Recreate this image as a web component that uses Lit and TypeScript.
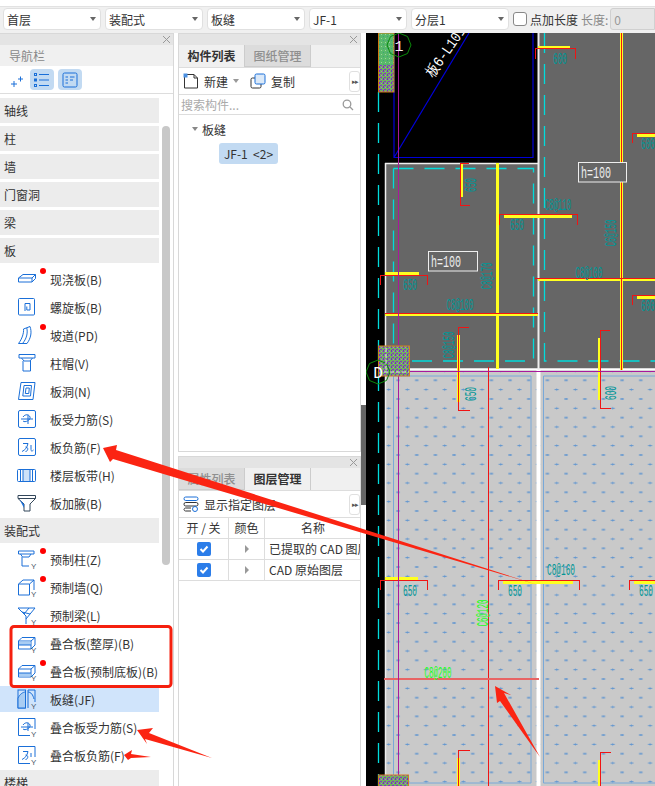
import { LitElement, html, svg, css } from "lit";
import { customElement } from "lit/decorators.js";

const RED = "#f01414";
const YEL = "#ffff20";
const TEAL = "#009696";
const CYAN = "#00dcdc";
const LIME = "#20ff20";

const Y = svg`<text x="14" y="19.5" font-size="8" font-family="Liberation Sans" fill="#4a5a6a" stroke="none">Y</text>`;

// nav icons, drawn on a 20x20 box
const icons: Record<string, unknown> = {
  slab: svg`<path d="M1.5 9L6 5.5H18.5V9.5L15 13H1.5ZM1.5 9H15V13M15 9L18.5 5.5" />`,
  spiral: svg`<rect x="1.5" y="1.5" width="16" height="16.5" rx="1" /><path d="M8 14V6.5H13V13H9.8V9.5" />`,
  ramp: svg`<path d="M1.5 18.5C5 14 7 8 6.5 4L13 1.5C15 7 14 13 10 18.5ZM9.8 3C11 8 9.5 14 5.5 18.5" />`,
  cap: svg`<path d="M2 1.5H18V5H2ZM4.5 5L7 8H13L15.5 5M6 8V18H13.5V8" />`,
  hole: svg`<path d="M4 1.5H18L16 18.5H1.5ZM7 4.5H14.5L13.5 15H5.8ZM9 7H12.3L11.8 12.5H8.3Z" />`,
  force: svg`<rect x="1.5" y="1.5" width="17" height="17" rx="1.5" /><path d="M6 8C8 5 12 5 13 8C14 11 8 14 6 12M4 10H16M11 6V15" />`,
  neg: svg`<rect x="1.5" y="1.5" width="17" height="17" rx="1.5" /><path d="M6 6.5H11C10 11 8 13 5 14.5M8.5 10C12 10 11 14.5 8.5 14.5M14 8V12.5C14 14.5 15 14.5 16.5 13" />`,
  band: svg`<rect x="0.5" y="4.5" width="18" height="12" rx="1" /><rect x="6" y="5" width="7" height="11" fill="#cfe2f8" stroke="none" /><path d="M6 4.5V16.5M13 4.5V16.5M3.5 4.5V16.5M15.5 4.5V16.5" />`,
  haunch: svg`<path d="M1 2.5H18.5V5.5H1ZM1 5.5L7 11V18H13V11L18.5 5.5" stroke="#33465a" /><path d="M2.5 6.5L7 11V15Z" fill="#1a6fd8" stroke="none" />`,
  preCol: svg`<path d="M1.5 2H17V5H1.5ZM3.5 5L5.5 8H12L14 5M5 8V17H12" />${Y}`,
  preWall: svg`<path d="M1.5 7L6 3H17V13M1.5 7V18H12.5V7ZM12.5 7L17 3" />${Y}`,
  preBeam: svg`<path d="M1 3H18L9 14V11L1 3ZM9 14V19M5 7L13 9M12 3L7 9" />${Y}`,
  lamThick: svg`<path d="M1.5 8L5 4.5H18V12L14 16H1.5ZM1.5 8H14V16M14 8L18 4.5" /><rect x="2" y="8.5" width="11.5" height="3.5" fill="#a9cdf3" stroke="none" /><path d="M1.5 12H14" />${Y}`,
  lamBase: svg`<path d="M1.5 8L5 4.5H18V12L14 16H1.5ZM1.5 8H14V16M14 8L18 4.5" /><rect x="2" y="12" width="11.5" height="3.5" fill="#a9cdf3" stroke="none" /><path d="M1.5 12H14" />${Y}`,
  joint: svg`<rect x="1" y="1" width="7.5" height="18" /><path d="M1 9C3 5 6 3 8.500 3V19H1Z" fill="#a9cdf3" /><path d="M11 19V1H18V13M11 3C14 3 16 6 17 10" />${Y}`,
  lamForce: svg`<path d="M13 18.500H1.500V1.500H18V12" /><path d="M6 8C8 5 12 5 13 8C14 11 8 14 6 12M4 10H16M11 6V14" />${Y}`,
  lamNeg: svg`<path d="M13 18.500H1.500V1.500H18V12" /><path d="M6 6.500H11C10 11 8 13 5 14.500M8.500 10C12 10 11 14.500 8.500 14.500M14 8V12" />${Y}`,
};

type NavRow = { label: string; head?: boolean; icon?: string; dot?: boolean; on?: boolean };

const navRows: NavRow[] = [
  { label: "轴线", head: true },
  { label: "柱", head: true },
  { label: "墙", head: true },
  { label: "门窗洞", head: true },
  { label: "梁", head: true },
  { label: "板", head: true },
  { label: "现浇板(B)", icon: "slab", dot: true },
  { label: "螺旋板(B)", icon: "spiral" },
  { label: "坡道(PD)", icon: "ramp", dot: true },
  { label: "柱帽(V)", icon: "cap" },
  { label: "板洞(N)", icon: "hole" },
  { label: "板受力筋(S)", icon: "force" },
  { label: "板负筋(F)", icon: "neg" },
  { label: "楼层板带(H)", icon: "band" },
  { label: "板加腋(B)", icon: "haunch" },
  { label: "装配式", head: true },
  { label: "预制柱(Z)", icon: "preCol", dot: true },
  { label: "预制墙(Q)", icon: "preWall", dot: true },
  { label: "预制梁(L)", icon: "preBeam" },
  { label: "叠合板(整厚)(B)", icon: "lamThick" },
  { label: "叠合板(预制底板)(B)", icon: "lamBase", dot: true },
  { label: "板缝(JF)", icon: "joint", on: true },
  { label: "叠合板受力筋(S)", icon: "lamForce" },
  { label: "叠合板负筋(F)", icon: "lamNeg" },
  { label: "楼梯", head: true },
];

// drawing strokes in page coordinates
const strokes: [string, string, number][] = [
  // yellow bars first, red rebar on top
  ["M538 47H570M637 135H655M637 297H655M504 216H572M538 279H655M385 273H419M385 314H538M461 163V197M497 163V369M621 33V370M458 335V402M599 338V400M385 578H418M503 582H573M634 582H655M458 758V786M599 760V786", YEL, 3],
  ["M535 59V48H575V59M632 143V133H655M632 305V295H655M499 225V214H577V225M535 278H655M380 285V275H427V285M385 313H538M460 163.500H469M460 163V205H470M621 33V370M398.500 163V297M459 327H469M458.500 327V370M458.500 370V410H470M600 330H610M600 330V408H611M488.500 367V786M380 590V580H427V590M498 590V580H579V590M629 590V580H655M458.500 786V750H470M600 786V752H611", RED, 1],
  ["M384 679H539", "#e86464", 2],
  ["M398.500 33V786M386 371.500H655", "#a8189c", 1],
];

const cadTexts: [number, number, string, string, number, boolean][] = [
  [560, 64, "600", TEAL, 14, false],
  [648, 149, "600", TEAL, 14, false],
  [648, 311, "600", TEAL, 14, false],
  [517, 230, "650", TEAL, 14, false],
  [410, 290, "650", TEAL, 14, false],
  [558, 210, "C8@110", TEAL, 26, false],
  [589, 278, "C8@100", TEAL, 27, false],
  [460, 310, "C8@100", TEAL, 27, false],
  [616, 233, "C6@150", TEAL, 27, true],
  [492, 276, "C8@170", TEAL, 27, true],
  [454, 345, "C8@150", TEAL, 27, true],
  [476, 185, "650", TEAL, 14, true],
  [476, 394, "650", TEAL, 14, true],
  [616, 393, "600", TEAL, 14, true],
  [410, 596, "650", TEAL, 14, false],
  [515, 596, "650", TEAL, 14, false],
  [646, 596, "650", TEAL, 14, false],
  [561, 575, "C8@160", TEAL, 28, false],
  [488, 613, "C6@120", LIME, 27, true],
  [438, 678, "C8@200", LIME, 27, false],
];

@customElement("app-root")
export class AppRoot extends LitElement {
  static styles = css`
    :host {
      display: block;
      position: relative;
      width: 655px;
      height: 786px;
      overflow: hidden;
      background: #fff;
      font-family: "Noto Sans CJK SC", "Noto Sans", sans-serif;
      font-size: 12px;
      color: #333;
    }
    .topbar {
      height: 24px;
      margin-top: 6px;
      padding: 0 0 2px 3px;
      box-sizing: content-box;
      border-top: 1px solid #e2e2e2;
      background: #f0f0f0;
      display: flex;
      align-items: center;
      gap: 4px;
      white-space: nowrap;
    }
    .combo {
      width: 98px;
      height: 22px;
      box-sizing: border-box;
      background: #fff;
      border: 1px solid #e0e0e0;
      border-radius: 4px;
      display: flex;
      align-items: center;
      justify-content: space-between;
      padding: 0 4px 0 3px;
    }
    .caret {
      width: 0;
      height: 0;
      border: 3px solid transparent;
      border-top: 4px solid #666;
      border-bottom: 0;
    }
    .check {
      width: 14px;
      height: 14px;
      box-sizing: border-box;
      border: 1px solid #888;
      border-radius: 3px;
      background: #fff;
      margin-right: -1px;
    }
    .muted {
      color: #8a8a8a;
      margin-left: -1px;
    }
    .len {
      flex: 1;
      height: 22px;
      box-sizing: border-box;
      border: 1px solid #d0d0d0;
      border-radius: 3px 0 0 3px;
      background: #e6e6e6;
      color: #999;
      padding: 2px 3px;
      margin-left: -2px;
    }
    .main {
      display: grid;
      grid-template-columns: 174px 4px 183px 5px 289px;
      height: 753px;
    }
    .panel {
      border: 1px solid #d8d8d8;
      border-bottom: 0;
      box-sizing: border-box;
      background: #fff;
      overflow: hidden;
    }
    .nav {
      grid-column: 1;
      border-left: 0;
      display: flex;
      flex-direction: column;
    }
    .grip {
      height: 11px;
      background: #e4e4e4;
      display: flex;
      justify-content: flex-end;
      align-items: center;
      padding-right: 3px;
      flex: none;
    }
    .grip svg {
      width: 7px;
      height: 7px;
      stroke: #999;
      fill: none;
    }
    .nav-title {
      height: 21px;
      line-height: 21px;
      background: #f0f0f0;
      color: #888;
      padding-left: 9px;
    }
    .nav-tools {
      height: 28px;
      box-sizing: border-box;
      border-bottom: 1px solid #ddd;
      display: flex;
      align-items: center;
      gap: 4px;
      padding-left: 8px;
    }
    .nav-tools .btn {
      width: 24px;
      height: 21px;
      border-radius: 4px;
      background: #c2daf2;
      display: flex;
      align-items: center;
      justify-content: center;
    }
    .nav-tools .plain {
      width: 18px;
      background: none;
      margin-right: 0;
    }
    .nav-tools svg {
      width: 16px;
      height: 16px;
      stroke: #1a6fd8;
      fill: none;
    }
    .nav-body {
      display: flex;
      flex: 1;
      overflow: hidden;
    }
    .list {
      width: 159px;
      padding-top: 4px;
      flex: none;
    }
    .thumb {
      width: 8px;
      height: 439px;
      margin: 32px 0 0 3px;
      border-radius: 4px;
      background: #c8c8c8;
    }
    .head {
      height: 25px;
      line-height: 25px;
      background: #ececec;
      margin-bottom: 3px;
      padding-left: 4px;
    }
    .item + .head {
      margin-top: 1px;
    }
    .item {
      position: relative;
      height: 28px;
      box-sizing: border-box;
      border-top: 1px solid transparent;
      border-bottom: 1px solid transparent;
      background-clip: padding-box;
      display: flex;
      align-items: center;
      gap: 13px;
      padding-left: 17px;
      white-space: nowrap;
    }
    .head + .item {
      margin-top: -1px;
    }
    .item.on {
      background-color: #d0e4fb;
    }
    .item svg {
      width: 20px;
      height: 20px;
      flex: none;
      fill: none;
      stroke: #1a6fd8;
      stroke-width: 1;
    }
    .dot {
      position: absolute;
      left: 40px;
      top: 2px;
      width: 6px;
      height: 6px;
      border-radius: 50%;
      background: #f00;
    }
    .mid {
      grid-column: 3;
      display: flex;
      flex-direction: column;
      gap: 4px;
      min-width: 0;
    }
    .mid .panel {
      min-height: 0;
    }
    .mid .upper {
      height: 419px;
      border-bottom: 1px solid #d8d8d8;
    }
    .mid .lower {
      flex: 1;
    }
    .tabs {
      height: 23px;
      background: #f0f0f0;
      display: flex;
      border-bottom: 1px solid #ddd;
      box-sizing: border-box;
    }
    .tab {
      width: 65px;
      text-align: center;
      line-height: 22px;
      font-weight: 700;
      color: #333;
      border-right: 1px solid #ccc;
    }
    .tab.off {
      background: #dcdcdc;
      color: #8f8f8f;
      font-weight: 500;
      border-bottom: 1px solid #ccc;
    }
    .tab.cur {
      background: #f0f0f0;
    }
    .tools {
      height: 27px;
      box-sizing: border-box;
      border-bottom: 1px solid #ddd;
      display: flex;
      align-items: center;
      padding-left: 4px;
      gap: 5px;
    }
    .tools svg {
      width: 16px;
      height: 16px;
      flex: none;
      fill: none;
    }
    .tools .copy {
      margin-left: 6px;
    }
    .tools .caret {
      border-top-color: #999;
    }
    .more {
      margin-left: auto;
      width: 9px;
      height: 19px;
      border: 1px solid #e0e0e0;
      border-radius: 3px;
      display: flex;
      align-items: center;
      justify-content: center;
      font-size: 7px;
      color: #555;
      letter-spacing: -1px;
    }
    .search {
      height: 20px;
      box-sizing: border-box;
      border-bottom: 1px solid #ddd;
      display: flex;
      align-items: center;
      justify-content: space-between;
      padding: 0 6px 0 2px;
      color: #aaa;
    }
    .search svg {
      width: 12px;
      height: 12px;
      stroke: #999;
      fill: none;
      stroke-width: 1.3;
    }
    .tree-row {
      margin: 5px 0 0 13px;
      display: flex;
      align-items: center;
      gap: 4px;
      height: 18px;
    }
    .tree-row .caret {
      border-top-color: #888;
    }
    .chip {
      margin: 5px 0 0 40px;
      width: 59px;
      height: 21px;
      line-height: 21px;
      border-radius: 3px;
      background: #c2daf2;
      text-align: center;
      white-space: pre;
    }
    .cols {
      display: grid;
      grid-template-columns: 50px 36px 96px;
    }
    .cols > div {
      height: 21px;
      line-height: 20px;
      box-sizing: border-box;
      border-right: 1px solid #ddd;
      border-bottom: 1px solid #ddd;
      text-align: center;
      white-space: nowrap;
      overflow: hidden;
      display: flex;
      align-items: center;
      justify-content: center;
    }
    .cols > div.name {
      justify-content: flex-start;
      padding-left: 4px;
      border-right: 0;
    }
    .cols > div.hn {
      border-right: 0;
    }
    .box {
      width: 14px;
      height: 14px;
      border-radius: 2px;
      background: #2b7de9;
      display: flex;
    }
    .box svg {
      width: 14px;
      height: 14px;
      fill: none;
      stroke: #fff;
      stroke-width: 2;
    }
    .tri {
      width: 0;
      height: 0;
      border: 4px solid transparent;
      border-left: 4px solid #999;
      border-right: 0;
    }
    .split {
      grid-column: 4;
    }
    .handle {
      width: 5px;
      height: 100px;
      margin-top: 372px;
      background: #666;
    }
    .canvas {
      grid-column: 5;
      display: block;
    }
    .canvas text {
      font-family: "Liberation Mono", monospace;
    }
    .marks {
      position: absolute;
      left: 0;
      top: 0;
      pointer-events: none;
    }
  `;

  private navRow(r: NavRow) {
    if (r.head) return html`<div class="head">${r.label}</div>`;
    return html`<div class="item ${r.on ? "on" : ""}">
      <svg viewBox="0 0 20 20">${icons[r.icon!]}</svg>
      <span>${r.label}</span>
      ${r.dot ? html`<i class="dot"></i>` : ""}
    </div>`;
  }

  private grip() {
    return html`<div class="grip"><svg viewBox="0 0 7 7"><path d="M0 0L7 7M7 0L0 7" /></svg></div>`;
  }

  private cad() {
    return svg`
      <defs>
        <pattern id="dots" width="18.67" height="18.67" patternUnits="userSpaceOnUse" x="2" y="1">
          <path d="M2 6H6M4 5V7M11.300 15.300H15.300M13.300 14.300V16.300" stroke="#5b93d0" stroke-width="1" />
        </pattern>
        <pattern id="hatchG" width="4" height="4" patternUnits="userSpaceOnUse">
          <rect width="4" height="4" fill="#58b86a" />
          <rect width="1" height="1" x="1" y="2" fill="#9fd49a" />
          <rect width="1" height="1" x="3" y="0" fill="#3f9e7c" />
        </pattern>
        <pattern id="hatchP" width="4" height="4" patternUnits="userSpaceOnUse">
          <rect width="4" height="4" fill="#70b060" />
          <rect width="2" height="1" x="0" y="1" fill="#8a30c8" />
          <rect width="1" height="2" x="3" y="2" fill="#7a20d0" />
          <rect width="1" height="1" x="1" y="3" fill="#b060e0" />
        </pattern>
      </defs>
      <rect x="366" y="33" width="289" height="753" fill="#000" />
      <rect x="386" y="163" width="152" height="208" fill="#666" />
      <rect x="539" y="33" width="116" height="338" fill="#666" />
      <rect x="386" y="371" width="269" height="415" fill="#c9c9c9" />
      <rect x="386" y="371" width="269" height="415" fill="url(#dots)" />
      <path d="M385.500 163V786M385 163.500H538" stroke="#eee" stroke-width="1.500" fill="none" />
      <path d="M385 369.500H655" stroke="#fff" stroke-width="2.500" />
      <path d="M538.500 33V370" stroke="#eee" stroke-width="2" />
      <path d="M538.500 370V786" stroke="#fff" stroke-width="4" />
      <path d="M394 33V157.500H533V33M394 157.500L469 33" stroke="#0000d8" stroke-width="1.200" fill="none" />
      <text transform="translate(433 78) rotate(-55)" fill="#fff" font-size="15" textLength="58" lengthAdjust="spacingAndGlyphs">板6-L101</text>
      <path d="M378.500 92V786" stroke=${CYAN} stroke-width="1.300" stroke-dasharray="20 11" />
      <path d="M393.500 168.500H533.500V361H386M393.500 168.500V361M544.500 33V361H655" stroke=${CYAN} stroke-width="1.300" stroke-dasharray="20 11" fill="none" />
      <path d="M393.500 376V783M393.500 376H531V783H393.500M655 376H543.500V783H655" stroke="#78a8d8" fill="none" />
      ${strokes.map(([d, c, w]) => svg`<path d=${d} stroke=${c} stroke-width=${w} fill="none" shape-rendering="crispEdges" />`)}
      <rect x="378" y="33" width="16" height="32" fill="url(#hatchG)" />
      <rect x="378" y="65" width="16" height="27" fill="url(#hatchP)" />
      <rect x="378.500" y="33" width="15.500" height="59" fill="none" stroke="#d07a10" />
      <rect x="378.500" y="346" width="31" height="30" fill="url(#hatchP)" stroke="#d08020" />
      <rect x="378.500" y="775" width="30" height="12" fill="url(#hatchP)" stroke="#d08020" />
      <path d="M399 33L407.500 36.500L411 45L407.500 53.500L399 57L390.500 53.500L387 45L390.500 36.500Z" stroke="#0a8a0a" fill="none" />
      <path d="M378 360L386.500 363.500L390 372L386.500 380.500L378 384L369.500 380.500L366 372V372L369.500 363.500Z" stroke="#0a8a0a" fill="none" />
      <path d="M384 372H409M386 348V372" stroke="#ddd" stroke-dasharray="4 2" />
      <text x="399" y="51" fill="#eee" font-size="15" text-anchor="middle">1</text>
      <text x="378" y="378" fill="#fff" font-size="16" text-anchor="middle">D</text>
      <rect x="578.500" y="162.500" width="48" height="19.500" fill="#666" stroke="#eee" />
      <rect x="428.500" y="251.500" width="49" height="19.500" fill="#666" stroke="#eee" />
      <text x="581" y="178" fill="#eee" font-size="17" textLength="30" lengthAdjust="spacingAndGlyphs">h=100</text>
      <text x="431" y="267" fill="#eee" font-size="17" textLength="30" lengthAdjust="spacingAndGlyphs">h=100</text>
      ${cadTexts.map(([x, y, t, c, w, rot]) =>
        svg`<text x=${x} y=${y} fill=${c} font-size="17" text-anchor="middle" textLength=${w}
          lengthAdjust="spacingAndGlyphs" transform=${rot ? `rotate(-90 ${x} ${y})` : ""}>${t}</text>`
      )}
    `;
  }

  render() {
    return html`
      <div class="topbar">
        ${["首层", "装配式", "板缝", "JF-1", "分层1"].map(
          (t) => html`<div class="combo"><span>${t}</span><i class="caret"></i></div>`
        )}
        <div class="check"></div>
        <span>点加长度</span>
        <span class="muted">长度:</span>
        <div class="len">0</div>
      </div>
      <div class="main">
        <div class="panel nav">
          ${this.grip()}
          <div class="nav-title">导航栏</div>
          <div class="nav-tools">
            <div class="btn plain">
              <svg viewBox="0 0 16 16"><path d="M2 12H8M5 9V15M9 7H14M11.500 4.500V9.500" /></svg>
            </div>
            <div class="btn">
              <svg viewBox="0 0 16 16">
                <rect x="0.500" y="1.500" width="2" height="2" /><rect x="0.500" y="7" width="2" height="2" /><rect x="0.500" y="12.500" width="2" height="2" />
                <path d="M5 2.500H15M5 8H15M5 13.500H15" />
              </svg>
            </div>
            <div class="btn">
              <svg viewBox="0 0 16 16">
                <rect x="1" y="1" width="14" height="14" rx="1.500" />
                <path d="M3.500 5H6M8 5H12.500M3.500 8H6M8 8H11M3.500 11H6" />
              </svg>
            </div>
          </div>
          <div class="nav-body">
            <div class="list">${navRows.map((r) => this.navRow(r))}</div>
            <div class="thumb"></div>
          </div>
        </div>

        <div class="mid">
          <div class="panel upper">
            ${this.grip()}
            <div class="tabs">
              <div class="tab">构件列表</div>
              <div class="tab off">图纸管理</div>
            </div>
            <div class="tools">
              <svg viewBox="0 0 16 16">
                <path d="M1.500 3V15H14.500V5L11 1.500H4" stroke="#333" />
                <path d="M11 1.500V5H14.500" stroke="#333" />
                <rect x="0.500" y="0.500" width="4" height="4" fill="#4a90e2" />
              </svg>
              <span>新建</span>
              <i class="caret"></i>
              <svg class="copy" viewBox="0 0 16 16">
                <rect x="1" y="5" width="10" height="10" rx="1.500" stroke="#333" />
                <rect x="5" y="1" width="10" height="10" rx="1.500" stroke="#1a6fd8" fill="#dbe9f8" />
              </svg>
              <span>复制</span>
              <div class="more">▸▸</div>
            </div>
            <div class="search">
              <span>搜索构件...</span>
              <svg viewBox="0 0 12 12"><circle cx="5" cy="5" r="3.800" /><path d="M8 8L11 11" /></svg>
            </div>
            <div class="tree-row"><i class="caret"></i><span>板缝</span></div>
            <div class="chip">JF-1  &lt;2&gt;</div>
          </div>

          <div class="panel lower">
            ${this.grip()}
            <div class="tabs">
              <div class="tab off">属性列表</div>
              <div class="tab cur">图层管理</div>
            </div>
            <div class="tools">
              <svg viewBox="0 0 16 16">
                <rect x="1" y="1" width="14" height="3.500" rx="1.700" stroke="#1a6fd8" />
                <rect x="1" y="6.500" width="14" height="3.500" rx="1.700" stroke="#333" />
                <path d="M8 15H2.500C1.500 15 1 14 1 13.500S1.500 12 2.500 12H8" stroke="#333" />
                <circle cx="12" cy="13" r="2.500" stroke="#1a6fd8" />
              </svg>
              <span>显示指定图层</span>
              <div class="more">▸▸</div>
            </div>
            <div class="cols">
              <div>开 / 关</div><div>颜色</div><div class="hn">名称</div>
              ${["已提取的 CAD 图层", "CAD 原始图层"].map(
                (n) => html`
                  <div>
                    <span class="box"><svg viewBox="0 0 14 14"><path d="M3.500 7L6 9.500L10.500 4.500" /></svg></span>
                  </div>
                  <div><i class="tri"></i></div>
                  <div class="name">${n}</div>
                `
              )}
            </div>
          </div>
        </div>

        <div class="split"><div class="handle"></div></div>

        <svg class="canvas" width="289" height="753" viewBox="366 33 289 753">${this.cad()}</svg>
      </div>

      <svg class="marks" width="655" height="786" viewBox="0 0 655 786">
        <rect x="11" y="626.500" width="160" height="60" rx="3" fill="none" stroke="#f5200f" stroke-width="3" />
        <g fill="#fb2412">
          <polygon points="103,448 117,445 116,450 538,585 113,459 110,462" />
          <polygon points="495,686 511,695 504,693 540,757 500,701 497,703" />
          <polygon points="137,730 153,728 149,733 212,758 145,739 147,744" />
          <polygon points="124,755 132,750 131,754 151,757 131,758 128,760" />
        </g>
      </svg>
    `;
  }
}
